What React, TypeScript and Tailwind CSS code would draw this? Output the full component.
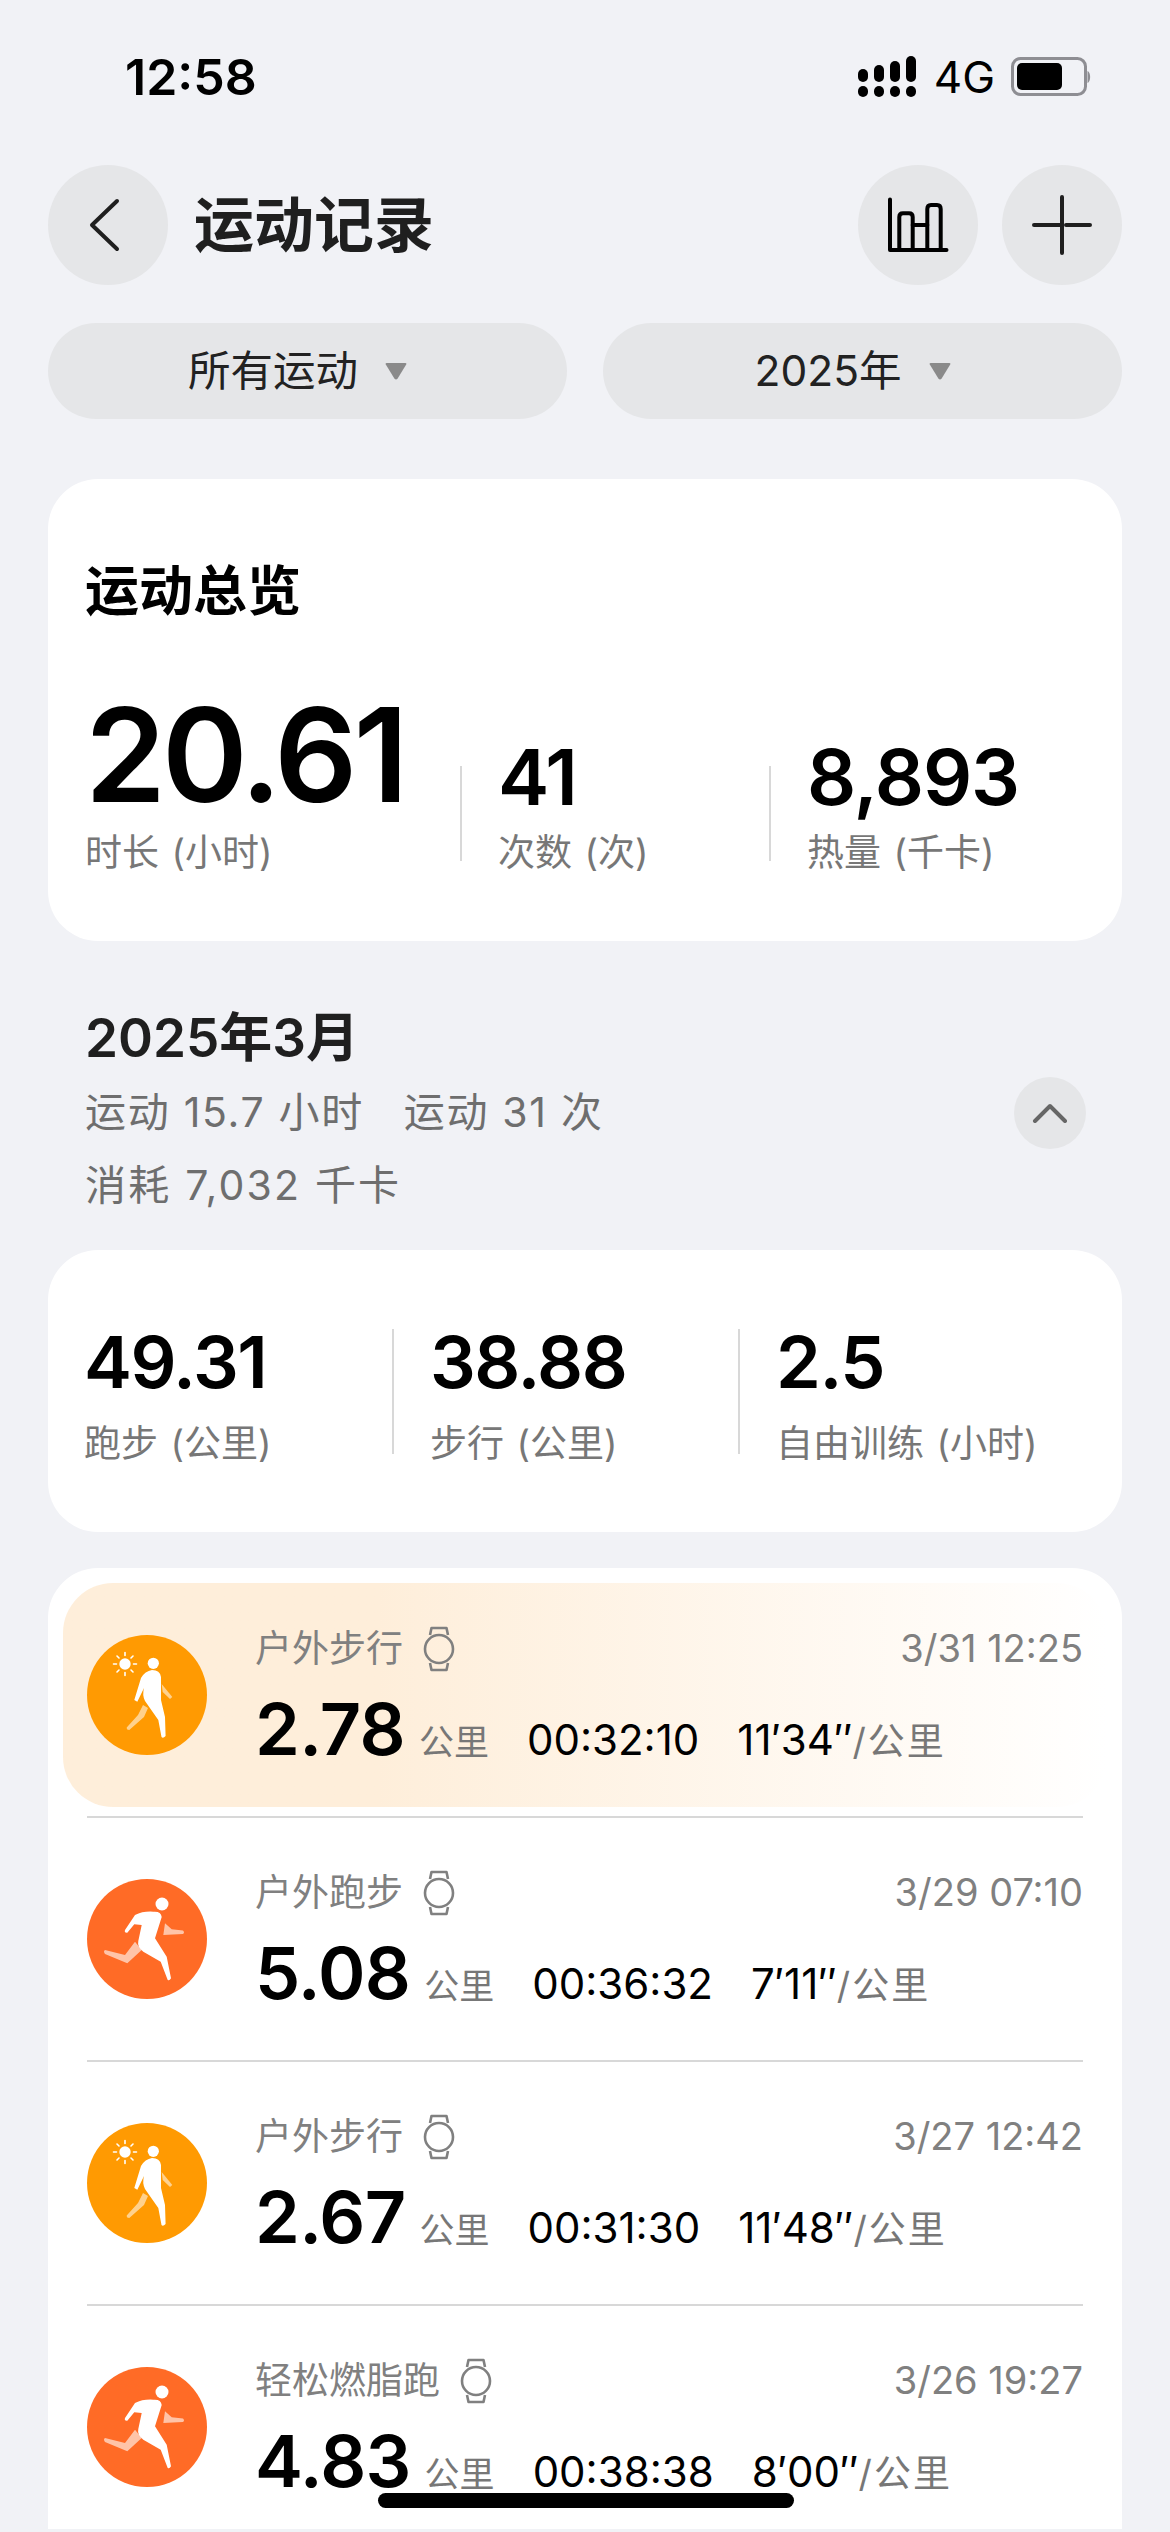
function SignalIcon() {
  const bars = [
    { x: 0, y: 13, h: 13 },
    { x: 16, y: 9, h: 17 },
    { x: 32, y: 5, h: 21 },
    { x: 48, y: 0, h: 26 },
  ];
  return (
    <svg width="58" height="42" viewBox="0 0 58 42" fill="#000">
      {bars.map((b) => (
        <g key={b.x}>
          <rect x={b.x} y={b.y} width="10" height={b.h} rx="5" />
          <rect x={b.x} y="30" width="10" height="11" rx="5" />
        </g>
      ))}
    </svg>
  );
}

function BatteryIcon() {
  return (
    <svg width="80" height="40" viewBox="0 0 80 40">
      <rect x="1.5" y="1.5" width="73" height="36" rx="8" fill="none" stroke="#8e8e93" strokeWidth="3" />
      <rect x="6" y="6" width="45" height="27" rx="5" fill="#000" />
      <path d="M76.5 14 C80 15 80 25 76.5 26 Z" fill="#8e8e93" />
    </svg>
  );
}

function WatchIcon() {
  return (
    <svg width="32" height="46" viewBox="0 0 32 46" fill="none" stroke="#808080" strokeWidth="2.6" strokeLinejoin="round">
      <path d="M7 9 L8.5 2 H23.5 L25 9" />
      <path d="M7 37 L8.5 44 H23.5 L25 37" />
      <circle cx="16" cy="23" r="14" />
    </svg>
  );
}

function WalkIcon() {
  return (
    <svg width="120" height="120" viewBox="0 0 120 120">
      <circle cx="60" cy="60" r="60" fill="#ff9a02" />
      <g fill="#fff" opacity="0.55">
        <path d="M56 70 L61 73 L57 82 L42.3 95 Q39.5 95 39.7 92.5 L51 80 Z" />
        <path d="M74.7 49 L85.3 62 L83 64 L75.7 57 Z" />
      </g>
      <g fill="#fff">
        <circle cx="66.3" cy="28.3" r="5.6" />
        <path d="M65 35 Q73 35 74 42 L74 65 L78 82 L78.6 101 Q76 104 74.5 102 L71.3 85 L58 66 Q55 60 57 53 L50.3 66.7 L47.3 65 L54 43 Q58 36 65 35 Z" />
        <circle cx="38" cy="29" r="5.7" />
      </g>
      <g stroke="#fff" strokeWidth="1.6" strokeLinecap="round">
        <path d="M38 17.5 V20.5 M38 37.5 V40.5 M26.5 29 H29.5 M46.5 29 H49.5 M30 21 L32 23 M44 35 L46 37 M30 37 L32 35 M44 23 L46 21" />
      </g>
    </svg>
  );
}

function RunIcon() {
  return (
    <svg width="120" height="120" viewBox="0 0 120 120">
      <circle cx="60" cy="60" r="60" fill="#ff6b26" />
      <g fill="#fff" opacity="0.6">
        <path d="M48 62.7 L54.7 71 L40.3 84.3 L18 75 Q16 72 18 71 L38 76 Z" />
        <path d="M78 44.3 L84.7 50.3 L96 51.5 Q98 53.5 96 55 L76.3 56 Z" />
      </g>
      <g fill="#fff">
        <circle cx="75" cy="25" r="6.5" />
        <path d="M38 51 L48 36 Q56 32 66.3 32.7 Q74 32 74.7 38 L68 59.3 L79.7 77.7 L84 99.3 Q82.5 102 80.7 101 L73.7 82.7 L56.3 72.7 Q50 68 51.3 62 L54.7 46 L47.3 45.3 L40.3 53.7 Q37 54 38 51 Z" />
      </g>
    </svg>
  );
}

function Stat({ value, label, valueClass, labelClass }: { value: string; label: string; valueClass: string; labelClass: string }) {
  return (
    <div className="flex flex-col">
      <div className={valueClass}>{value}</div>
      <div className={labelClass}>{label}</div>
    </div>
  );
}

function Filter({ label }: { label: string }) {
  return (
    <div className="flex-1 h-[96px] rounded-full bg-[#e5e6e8] flex items-center justify-center gap-[27px] pr-[20px]">
      <span className="text-[42.5px] text-[#222222]">{label}</span>
      <svg width="22" height="17" viewBox="0 0 22 17" fill="#8a8a8a">
        <path d="M1.5 0 H20.5 Q22 0 21.2 1.6 L12.5 15.8 Q11 17 9.5 15.8 L0.8 1.6 Q0 0 1.5 0 Z" />
      </svg>
    </div>
  );
}

type Workout = {
  kind: "walk" | "run";
  title: string;
  date: string;
  dist: string;
  time: string;
  pace: string;
};

const workouts: Workout[] = [
  { kind: "walk", title: "户外步行", date: "3/31 12:25", dist: "2.78", time: "00:32:10", pace: "11′34″" },
  { kind: "run", title: "户外跑步", date: "3/29 07:10", dist: "5.08", time: "00:36:32", pace: "7′11″" },
  { kind: "walk", title: "户外步行", date: "3/27 12:42", dist: "2.67", time: "00:31:30", pace: "11′48″" },
  { kind: "run", title: "轻松燃脂跑", date: "3/26 19:27", dist: "4.83", time: "00:38:38", pace: "8′00″" },
];

function WorkoutRow({ item }: { item: Workout }) {
  return (
    <>
      {item.kind === "walk" ? <WalkIcon /> : <RunIcon />}
      <div className="flex-1 ml-[48px] pt-[4px] flex flex-col">
        <div className="flex items-center h-[46px]">
          <span className="text-[37px] text-[#808080]">{item.title}</span>
          <span className="ml-[20px] flex"><WatchIcon /></span>
          <span className="ml-auto text-[38px] text-[#808080]">{item.date}</span>
        </div>
        <div className="flex items-baseline mt-[17px] h-[80px]">
          <span className="text-[72px] leading-[80px] font-semibold tracking-[-0.01em] text-black">{item.dist}</span>
          <span className="ml-[14px] text-[35px] text-[#777777]">公里</span>
          <span className="ml-[38px] text-[42px] text-black">{item.time}</span>
          <span className="ml-[38px] text-[42px] text-black">{item.pace}</span>
          <span className="text-[37px] tracking-[2px] text-[#777777]">/公里</span>
        </div>
      </div>
    </>
  );
}

export default function App() {
  return (
    <div className="relative h-[2532px] w-[1170px] overflow-hidden bg-[#f1f2f6] font-['Inter','Noto_Sans_CJK_SC',sans-serif]">
      {/* status bar */}
      <div className="h-[165px] pl-[125px] pr-[79px] pt-[47px] flex items-start justify-between">
        <span className="text-[50px] leading-[60px] font-semibold text-black">12:58</span>
        <div className="flex items-center mt-[8px]">
          <SignalIcon />
          <span className="ml-[18px] text-[44px] leading-[44px] text-black">4G</span>
          <span className="ml-[16px] flex"><BatteryIcon /></span>
        </div>
      </div>

      {/* header */}
      <div className="mx-[48px] flex items-center h-[120px]">
        <div className="w-[120px] h-[120px] rounded-full bg-[#e5e6e8] flex items-center justify-center">
          <svg width="120" height="120" viewBox="0 0 120 120" fill="none" stroke="#1f1f1f" strokeWidth="4" strokeLinecap="round" strokeLinejoin="round">
            <path d="M69 36 L44 60 L69 84" />
          </svg>
        </div>
        <h1 className="ml-[26px] text-[60px] font-semibold text-[#1f1f1f]">运动记录</h1>
        <div className="ml-auto w-[120px] h-[120px] rounded-full bg-[#e5e6e8] flex items-center justify-center">
          <svg width="120" height="120" viewBox="0 0 120 120" fill="none" stroke="#000" strokeWidth="4" strokeLinecap="round" strokeLinejoin="round">
            <path d="M32 34.5 V85 H88.5" />
            <path d="M41.3 85 V52 Q41.3 48.3 45 48.3 H51 Q54.7 48.3 54.7 52 V85" />
            <path d="M54.7 60 H69.3" />
            <path d="M69.3 85 V44 Q69.3 40 73 40 H79 Q82.7 40 82.7 44 V85" />
          </svg>
        </div>
        <div className="ml-[24px] w-[120px] h-[120px] rounded-full bg-[#e5e6e8] flex items-center justify-center">
          <svg width="120" height="120" viewBox="0 0 120 120" fill="none" stroke="#1f1f1f" strokeWidth="4" strokeLinecap="round">
            <path d="M60 32 V88 M32 60 H58 M64 60 H88" />
          </svg>
        </div>
      </div>

      {/* filters */}
      <div className="mx-[48px] mt-[38px] flex gap-[36px]">
        <Filter label="所有运动" />
        <Filter label="2025年" />
      </div>

      {/* overview */}
      <div className="mx-[48px] mt-[60px] h-[462px] rounded-[50px] bg-white pl-[37px] pt-[78px]">
        <h2 className="text-[54px] leading-[70px] font-semibold text-black">运动总览</h2>
        <div className="mt-[58px] flex items-end">
          <div className="w-[375px]">
            <Stat
              value="20.61"
              label="时长 (小时)"
              valueClass="text-[130px] leading-[140px] font-semibold tracking-[-0.03em] text-black"
              labelClass="mt-[6px] text-[37px] leading-[44px] [word-spacing:2px] text-[#777777]"
            />
          </div>
          <div className="w-[2px] h-[95px] mb-[14px] bg-[#d8d8d8]" />
          <div className="ml-[36px] w-[271px]">
            <Stat
              value="41"
              label="次数 (次)"
              valueClass="text-[77px] leading-[90px] font-semibold tracking-[-0.02em] text-black"
              labelClass="mt-[9px] text-[37px] leading-[44px] [word-spacing:2px] text-[#777777]"
            />
          </div>
          <div className="w-[2px] h-[95px] mb-[14px] bg-[#d8d8d8]" />
          <div className="ml-[36px]">
            <Stat
              value="8,893"
              label="热量 (千卡)"
              valueClass="text-[77px] leading-[90px] font-semibold tracking-[-0.015em] text-black"
              labelClass="mt-[9px] text-[37px] leading-[44px] [word-spacing:2px] text-[#777777]"
            />
          </div>
        </div>
      </div>

      {/* month summary */}
      <div className="mx-[48px] h-[309px] pl-[37px] pt-[62px] pr-[36px]">
        <div className="text-[53px] leading-[70px] font-semibold text-[#1f1f1f]">2025年3月</div>
        <div className="flex items-center mt-[4px] h-[72px]">
          <span className="text-[41px] tracking-[1.7px] text-[#6e6e6e] whitespace-pre">运动 15.7 小时   运动 31 次</span>
          <div className="ml-auto w-[72px] h-[72px] rounded-full bg-[#e5e6e8] flex items-center justify-center">
            <svg width="36" height="20" viewBox="0 0 36 20" fill="none" stroke="#666" strokeWidth="4" strokeLinecap="round" strokeLinejoin="round">
              <path d="M3 18 L18 3 L33 18" />
            </svg>
          </div>
        </div>
        <div className="text-[41px] tracking-[2.2px] leading-[72px] text-[#6e6e6e]">消耗 7,032 千卡</div>
      </div>

      {/* monthly totals */}
      <div className="mx-[48px] h-[282px] rounded-[50px] bg-white pl-[36px] pt-[67px]">
        <div className="flex items-end">
          <div className="w-[308px]">
            <Stat
              value="49.31"
              label="跑步 (公里)"
              valueClass="text-[72px] leading-[90px] font-semibold tracking-[-0.02em] text-black"
              labelClass="mt-[15px] text-[37px] leading-[44px] [word-spacing:2px] text-[#777777]"
            />
          </div>
          <div className="w-[2px] h-[125px] mb-[12px] bg-[#d8d8d8]" />
          <div className="ml-[36px] w-[308px]">
            <Stat
              value="38.88"
              label="步行 (公里)"
              valueClass="text-[72px] leading-[90px] font-semibold tracking-[-0.02em] text-black"
              labelClass="mt-[15px] text-[37px] leading-[44px] [word-spacing:2px] text-[#777777]"
            />
          </div>
          <div className="w-[2px] h-[125px] mb-[12px] bg-[#d8d8d8]" />
          <div className="ml-[36px]">
            <Stat
              value="2.5"
              label="自由训练 (小时)"
              valueClass="text-[72px] leading-[90px] font-semibold tracking-[-0.02em] text-black"
              labelClass="mt-[15px] text-[37px] leading-[44px] [word-spacing:2px] text-[#777777]"
            />
          </div>
        </div>
      </div>

      {/* workout list */}
      <div className="mx-[48px] mt-[36px] h-[961px] overflow-hidden rounded-t-[50px] bg-white pt-[15px]">
        <div className="mx-[15px] h-[224px] px-[24px] rounded-[50px] bg-linear-to-r from-[#feeeda] from-[30%] to-white flex items-center">
          <WorkoutRow item={workouts[0]} />
        </div>
        <div className="mt-[9px] mx-[39px] h-[2px] bg-[#d8d8d8]" />
        {workouts.slice(1).map((w) => (
          <div key={w.date}>
            <div className="mx-[39px] h-[242px] flex items-center">
              <WorkoutRow item={w} />
            </div>
            <div className="mx-[39px] h-[2px] bg-[#d8d8d8]" />
          </div>
        ))}
      </div>

      {/* home indicator */}
      <div className="absolute left-[378px] top-[2493px] w-[416px] h-[15px] rounded-full bg-black" />
    </div>
  );
}
